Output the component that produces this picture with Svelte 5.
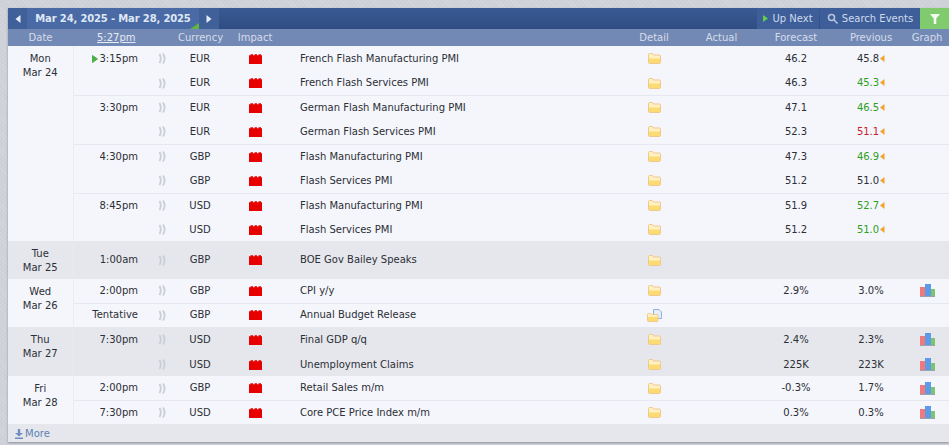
<script>
  const days = [
    { d: ['Mon', 'Mar 24'], alt: false, rows: [
      { h: 25, t: '3:15pm', next: true, c: 'EUR', e: 'French Flash Manufacturing PMI', f: '46.2', p: '45.8', rev: true },
      { h: 24, low: true, t: '', c: 'EUR', e: 'French Flash Services PMI', f: '46.3', p: '45.3', pc: 'good', rev: true },
      { h: 24, low: true, t: '3:30pm', line: true, c: 'EUR', e: 'German Flash Manufacturing PMI', f: '47.1', p: '46.5', pc: 'good', rev: true },
      { h: 25, low: true, t: '', c: 'EUR', e: 'German Flash Services PMI', f: '52.3', p: '51.1', pc: 'bad', rev: true },
      { h: 24, low: true, t: '4:30pm', line: true, c: 'GBP', e: 'Flash Manufacturing PMI', f: '47.3', p: '46.9', pc: 'good', rev: true },
      { h: 25, low: true, t: '', c: 'GBP', e: 'Flash Services PMI', f: '51.2', p: '51.0', rev: true },
      { h: 24, low: true, t: '8:45pm', line: true, c: 'USD', e: 'Flash Manufacturing PMI', f: '51.9', p: '52.7', pc: 'good', rev: true },
      { h: 24, low: true, t: '', c: 'USD', e: 'Flash Services PMI', f: '51.2', p: '51.0', pc: 'good', rev: true }
    ]},
    { d: ['Tue', 'Mar 25'], alt: true, rows: [
      { h: 38, t: '1:00am', c: 'GBP', e: 'BOE Gov Bailey Speaks', f: '', p: '' }
    ]},
    { d: ['Wed', 'Mar 26'], alt: false, rows: [
      { h: 24, t: '2:00pm', c: 'GBP', e: 'CPI y/y', f: '2.9%', p: '3.0%', g: true },
      { h: 24, t: 'Tentative', line: true, c: 'GBP', e: 'Annual Budget Release', f: '', p: '', doc: true }
    ]},
    { d: ['Thu', 'Mar 27'], alt: true, rows: [
      { h: 25, t: '7:30pm', c: 'USD', e: 'Final GDP q/q', f: '2.4%', p: '2.3%', g: true },
      { h: 24, low: true, t: '', c: 'USD', e: 'Unemployment Claims', f: '225K', p: '223K', g: true }
    ]},
    { d: ['Fri', 'Mar 28'], alt: false, rows: [
      { h: 24, low: true, t: '2:00pm', c: 'GBP', e: 'Retail Sales m/m', f: '-0.3%', p: '1.7%', g: true },
      { h: 24, low: true, t: '7:30pm', line: true, c: 'USD', e: 'Core PCE Price Index m/m', f: '0.3%', p: '0.3%', g: true }
    ]}
  ];
</script>

{#snippet tri(dir)}
  <svg class="tri" width="6" height="8" viewBox="0 0 6 8">
    {#if dir === 'l'}<path d="M5.500 0v8L.500 4z" fill="#e6edf8"/>{:else}<path d="M.500 0v8l5-4z" fill="#e6edf8"/>{/if}
  </svg>
{/snippet}

{#snippet folder(doc)}
  {#if doc}
    <svg class="ico" width="15" height="13" viewBox="0 0 15 13">
      <path d="M6.500 .5h5.500l2.500 2.500v6.500h-8z" fill="#e6eefb" stroke="#8fb0e0"/>
      <path d="M.5 11.500V5.500q0-1 1-1h2.500l1 1h5q1 0 1 1v5q0 1-1 1h-8.500q-1 0-1-1z" fill="#fff1c2" stroke="#f1c68f"/>
      <path d="M1 8h10v4H1z" fill="#fbdb72"/>
    </svg>
  {:else}
    <svg class="ico" width="13" height="11" viewBox="0 0 13 11">
      <path d="M.5 9.500V1.500q0-1 1-1h3l1 1.500h6q1 0 1 1v6.500q0 1-1 1h-10q-1 0-1-1z" fill="#fff1c2" stroke="#f1c68f"/>
      <path d="M1 5.500h11V10H1z" fill="#fbdb72"/>
    </svg>
  {/if}
{/snippet}

<main class="cal">
  <div class="bar">
    <button class="arrow">{@render tri('l')}</button>
    <button class="range">Mar 24, 2025 - Mar 28, 2025<i class="corner"></i></button>
    <button class="arrow second">{@render tri('r')}</button>
    <div class="spacer"></div>
    <button class="tool">
      <svg width="5" height="7" viewBox="0 0 5 7"><path d="M0 0v7l5-3.500z" fill="#5fd04a"/></svg>
      Up Next
    </button>
    <button class="tool search">
      <svg width="11" height="11" viewBox="0 0 11 11" fill="none" stroke="#b9c7de" stroke-width="1.500"><circle cx="4.500" cy="4.500" r="3"/><path d="M6.800 6.800 10.500 10.500"/></svg>
      Search Events
    </button>
    <button class="filter" aria-label="Filter">
      <svg width="10" height="10" viewBox="0 0 10 10"><path d="M0 0h10L6.300 4.500V10H3.700V4.500z" fill="#f2fbee"/></svg>
    </button>
  </div>

  <table>
    <colgroup>
      <col class="c-date"/><col class="c-time"/><col class="c-snd"/><col class="c-cur"/><col class="c-imp"/>
      <col class="c-evt"/><col class="c-det"/><col class="c-act"/><col class="c-fc"/><col class="c-prev"/><col class="c-gr"/>
    </colgroup>
    <thead>
      <tr>
        <th>Date</th>
        <th class="now" colspan="2"><u>5:27pm</u></th>
        <th>Currency</th>
        <th>Impact</th>
        <th></th>
        <th>Detail</th>
        <th>Actual</th>
        <th>Forecast</th>
        <th>Previous</th>
        <th>Graph</th>
      </tr>
    </thead>
    <tbody>
      {#each days as day}
        {#each day.rows as r, i}
          <tr class:alt={day.alt} class:line={r.line} class:low={r.low} style="height:{r.h}px">
            {#if i === 0}
              <td class="date" rowspan={day.rows.length}>{day.d[0]}<br/>{day.d[1]}</td>
            {/if}
            <td class="time">
              {#if r.next}<svg class="next" width="6" height="8" viewBox="0 0 6 8"><path d="M.5 .5v7l5-3.500z" fill="#4cb04a" stroke="#4cb04a" stroke-linejoin="round"/></svg>{/if}{r.t}
            </td>
            <td class="mid">
              <svg class="ico" width="8" height="11" viewBox="0 0 8 11" fill="none" stroke="#c9ced6" stroke-width="1.800"><path d="M1.500 1q2.500 4.500 0 9M5 .5q3.200 5 0 10"/></svg>
            </td>
            <td class="mid">{r.c}</td>
            <td class="mid">
              <svg class="ico" width="13" height="10" viewBox="0 0 13 10"><path d="M0 1.200h1.500V.2h2.500v1h1.500V.2H8v1h1.500V.2H12v1h1V10H0z" fill="#e60000"/></svg>
            </td>
            <td class="event">{r.e}</td>
            <td class="mid">{@render folder(r.doc)}</td>
            <td class="mid"></td>
            <td class="mid">{r.f}</td>
            <td class="mid">
              <span class={r.pc}>{r.p}</span>{#if r.rev}<svg class="rev" width="5" height="7" viewBox="0 0 5 7"><path d="M4.500 0v7L0 3.500z" fill="#f2a42c"/></svg>{/if}
            </td>
            <td class="mid">
              {#if r.g}
                <svg class="ico" width="15" height="13" viewBox="0 0 15 13">
                  <rect x="0" y="3" width="5" height="10" fill="#f07a7a"/>
                  <rect x="11" y="5" width="4" height="8" fill="#7cc46f"/>
                  <rect x="5" y="0" width="6" height="13" fill="#5b9be8"/>
                  <rect x="0" y="12" width="15" height="1" fill="#98a2b0"/>
                </svg>
              {/if}
            </td>
          </tr>
        {/each}
      {/each}
    </tbody>
  </table>

  <div class="foot">
    <svg width="8" height="10" viewBox="0 0 8 10"><path d="M2.800 0h2.400v4H8L4 7.500 0 4h2.800zM0 8.500h8V10H0z" fill="#6d8fc0"/></svg>
    <span>More</span>
  </div>
</main>

<style>
  :global(body) {
    margin: 0;
    height: 445px;
    overflow: hidden;
    background: repeating-linear-gradient(45deg, #d3d6dc 0 1px, #cdd1d7 1px 3px);
  }
  .cal {
    margin: 8px 0 0 8px;
    width: 941px;
    font: 10px/14px "DejaVu Sans", Verdana, sans-serif;
    color: #2b2f36;
    box-shadow: 0 1px 2px #8b9099;
  }
  button {
    border: 0;
    padding: 0;
    margin: 0;
    font: inherit;
    color: inherit;
  }
  .bar {
    display: flex;
    height: 21px;
    background: linear-gradient(#3a5a94, #2f4d82);
    color: #dde6f4;
  }
  .arrow {
    width: 19px;
    background: #3f6099;
    display: flex;
    align-items: center;
    justify-content: center;
  }
  .arrow.second { width: 20px; }
  .range {
    position: relative;
    width: 172px;
    background: #4a6aa5;
    font-weight: bold;
    letter-spacing: -.15px;
    white-space: nowrap;
    color: #dfe7f4;
  }
  .corner {
    position: absolute;
    right: 0;
    bottom: 0;
    border-style: solid;
    border-width: 0 0 6px 9px;
    border-color: transparent transparent #5fb53f transparent;
  }
  .spacer { flex: 1; }
  .tool {
    display: flex;
    align-items: center;
    justify-content: center;
    gap: 4px;
    width: 62px;
    background: #3e5e99;
    color: #cfdaeb;
    margin-right: 1px;
  }
  .search { width: 100px; margin-right: 0; }
  .filter {
    width: 29px;
    background: #7fcb6e;
    display: flex;
    align-items: center;
    justify-content: center;
  }
  table {
    display: table;
    width: 941px;
    table-layout: fixed;
    border-collapse: collapse;
    border-spacing: 0;
    background: #f5f6fb;
  }
  .c-date { width: 65px; }
  .c-time { width: 73px; }
  .c-snd { width: 32px; }
  .c-cur { width: 44px; }
  .c-imp { width: 66px; }
  .c-evt { width: 332px; }
  .c-det { width: 68px; }
  .c-act { width: 67px; }
  .c-fc { width: 82px; }
  .c-prev { width: 68px; }
  .c-gr { width: 44px; }
  th {
    height: 17px;
    padding: 0;
    font-weight: normal;
    color: #d5dcea;
    background: #7389b5;
    white-space: nowrap;
  }
  th.now { text-align: left; padding-left: 24px; color: #e6ebf4; }
  td {
    padding: 0;
    white-space: nowrap;
    vertical-align: middle;
  }
  tr.low td:not(.date) { padding-top: 1px; }
  .mid { text-align: center; }
  .date {
    text-align: center;
    vertical-align: top;
    padding-top: 6px;
    line-height: 13.500px;
    border-right: 1px solid #eaecf2;
  }
  tr.alt td { background: #e6e7ec; }
  .time { text-align: right; padding-right: 8px; }
  .event { padding-left: 12px; }
  tr.line td:not(.date) { border-top: 1px solid #e6e8ef; }
  .ico { display: inline-block; vertical-align: middle; }
  .tri { display: block; }
  .next { margin-right: 1px; vertical-align: -1px; }
  .rev { margin-left: 1px; vertical-align: 0; }
  .good { color: #2f9e1f; }
  .bad { color: #c8202a; }
  .foot {
    display: flex;
    align-items: center;
    gap: 2px;
    height: 17px;
    padding: 1px 0 0 7px;
    background: #e6e7ec;
    color: #5d82b5;
  }
</style>
